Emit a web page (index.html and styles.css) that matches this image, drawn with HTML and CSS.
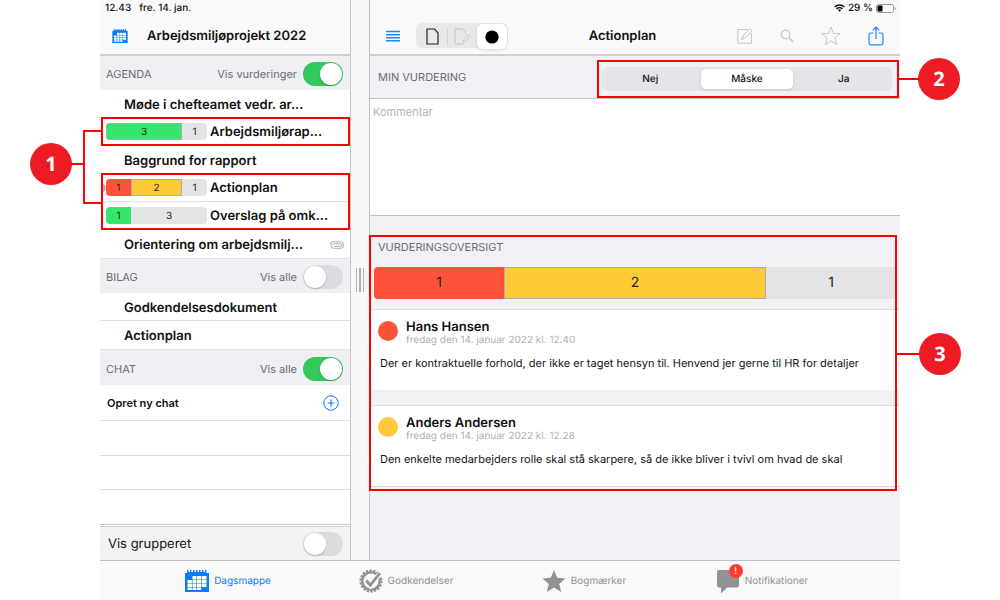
FILE: index.html
```html
<!DOCTYPE html>
<html lang="da">
<head>
<meta charset="utf-8">
<meta name="viewport" content="width=device-width, initial-scale=1">
<title>Arbejdsmiljøprojekt 2022</title>
<link rel="stylesheet" href="styles.css">
</head>
<body>
<svg class="defs" aria-hidden="true">
  <symbol id="calendar" viewBox="0 0 24 22">
    <path d="M0 3h2V0h1.400v2h1.600V0h1.400v2H8V0h1.400v2H11V0h1.400v2H14V0h1.400v2H17V0h1.400v2H20V0h1.400v3H24v19H0z" fill="currentColor"/>
    <path d="M7.500 6h3.500v3.500H7.500zM11.600 6h4.600v3.500h-4.600zM16.800 6h4.700v3.500h-4.700zM2.500 10.100h4.400v3.400H2.500zM7.500 10.100h3.500v3.400H7.500zM11.600 10.100h4.600v3.400h-4.600zM16.800 10.100h4.700v3.400h-4.700zM2.500 14.100h4.400v2.900H2.500zM7.500 14.100h3.500v2.900H7.500zM11.600 14.100h4.600v2.900h-4.600zM16.800 14.100h4.700v2.900h-4.700zM2.500 17.600h4.400V20H2.500zM7.500 17.600h3.500V20H7.500zM11.600 17.600h4.600V20h-4.600z" fill="#fff"/>
  </symbol>
</svg>
<div class="app">
  <div class="workspace">
    <aside class="sidebar">
      <header class="bar">
        <div class="status"><span>12.43</span><span>fre. 14. jan.</span></div>
        <div class="bar-title">
          <svg class="icon-cal-small"><use href="#calendar"/></svg>
          <h1>Arbejdsmiljøprojekt 2022</h1>
        </div>
      </header>

      <div class="section-head">
        <h2>AGENDA</h2>
        <label for="ratings">Vis vurderinger</label>
        <input class="switch" id="ratings" type="checkbox" role="switch" checked>
      </div>
      <div class="agenda">
        <a class="row indent" href="#">Møde i chefteamet vedr. ar...</a>
        <div class="framed">
          <a class="row" href="#"><span class="mini"><span class="seg green outline" style="flex-grow:3">3</span><span class="seg">1</span></span>Arbejdsmiljørap...</a>
        </div>
        <a class="row indent" href="#">Baggrund for rapport</a>
        <div class="framed">
          <a class="row marked" href="#"><span class="mini"><span class="seg red">1</span><span class="seg yellow outline" style="flex-grow:2">2</span><span class="seg">1</span></span>Actionplan</a>
          <a class="row" href="#"><span class="mini"><span class="seg green">1</span><span class="seg" style="flex-grow:3">3</span></span>Overslag på omk...</a>
        </div>
        <a class="row indent final" href="#">Orientering om arbejdsmilj...
          <svg class="clip" viewBox="0 0 15 8"><path d="M5 5.300h6.500a1.200 1.200 0 0 0 0-2.500H4.500a2.200 2.200 0 0 0 0 4.500H11.500a3 3 0 0 0 0-6.500H3.500A3 3 0 0 0 1 3.500" fill="none" stroke="#adadad" stroke-width="1"/></svg>
        </a>
        <span class="bracket"></span>
        <span class="badge badge-left">1</span>
      </div>

      <div class="section-head">
        <h2>BILAG</h2>
        <label for="files">Vis alle</label>
        <input class="switch" id="files" type="checkbox" role="switch">
      </div>
      <a class="row indent" href="#">Godkendelsesdokument</a>
      <a class="row indent final" href="#">Actionplan</a>

      <div class="section-head tall">
        <h2>CHAT</h2>
        <label for="chats">Vis alle</label>
        <input class="switch" id="chats" type="checkbox" role="switch" checked>
      </div>
      <button class="new-chat" type="button">Opret ny chat
        <svg viewBox="0 0 16 16"><g fill="none" stroke="#0a7aff"><circle cx="8" cy="8" r="7.200"/><path d="M8 4.500v7M4.500 8h7" stroke-width="1.200"/></g></svg>
      </button>
      <div class="blank"></div>
      <div class="blank"></div>
      <div class="blank last"></div>
      <div class="grouping">
        <label for="grouped">Vis grupperet</label>
        <input class="switch" id="grouped" type="checkbox" role="switch">
      </div>
    </aside>

    <div class="divider"><span class="grip"></span></div>

    <main class="detail">
      <header class="bar">
        <div class="status right">
          <svg class="wifi" viewBox="0 0 11 8"><path d="M.7 3a7 7 0 0 1 9.600 0M2.500 4.900a4.300 4.300 0 0 1 6 0" fill="none" stroke="#111" stroke-width="1.500"/><path d="M3.900 6.100a2.300 2.300 0 0 1 3.200 0L5.500 7.800z" fill="#111"/></svg>
          <span>29 %</span>
          <svg class="battery" viewBox="0 0 20 9"><rect x=".5" y=".5" width="17" height="8" rx="2" fill="none" stroke="#999"/><rect x="1.500" y="1.500" width="5" height="6" rx="1" fill="#000"/><path d="M18.700 3v3a1.600 1.600 0 0 0 0-3" fill="#999"/></svg>
        </div>
        <div class="toolbar">
          <button type="button" aria-label="Menu"><svg width="14" height="12" viewBox="0 0 14 12"><path d="M0 1.500h14M0 4.700h14M0 7.700h14M0 10.800h14" stroke="#1a88ff" stroke-width="1.500"/></svg></button>
          <div class="modes">
            <button type="button" aria-label="Dokument"><svg width="13" height="17" viewBox="0 0 13 17"><path d="M1 1h7.500L12 5v11H1z" fill="none" stroke="#222" stroke-width="1.200"/></svg></button>
            <button type="button" aria-label="Rediger dokument"><svg width="17" height="17" viewBox="0 0 17 17"><g fill="none" stroke="#c4c4c6"><path d="M11.500 6.500V4.500L8.500 1H1v15h8.500"/><path d="M9 14.500l.8-3 4.700-4.800 1.900 1.900-4.700 4.900z"/></g></svg></button>
            <button class="active" type="button" aria-label="Vurdering"><svg width="14" height="14" viewBox="0 0 14 14"><circle cx="7" cy="7" r="6.600"/></svg></button>
          </div>
          <h1>Actionplan</h1>
          <div class="actions">
            <button type="button" aria-label="Rediger"><svg width="16" height="16" viewBox="0 0 16 16"><g fill="none" stroke="#c7c7c8"><path d="M11 1.500H.8v13.700h13.700V5"/><path d="M4.500 11.500l1-3.300 7.800-7.500 2 2-7.600 7.600zM5.500 8.200l2.200 2.100"/></g></svg></button>
            <button type="button" aria-label="Søg"><svg width="14" height="14" viewBox="0 0 14 14"><g fill="none" stroke="#c7c7c8"><circle cx="5.500" cy="5.500" r="4.300" stroke-width="1.200"/><path d="M8.700 8.700l4.500 4.300" stroke-width="1.600"/></g></svg></button>
            <button type="button" aria-label="Bogmærk"><svg width="20" height="20" viewBox="0 0 20 20"><path d="M10 .9l2.400 6.500 6.800.3-5.300 4.300 1.900 6.700-5.800-3.900-5.800 3.900L6.100 12 .8 7.700l6.800-.3z" fill="none" stroke="#c7c7c8"/></svg></button>
            <button type="button" aria-label="Del"><svg width="16" height="20" viewBox="0 0 16 20"><path d="M5.500 7H2.500Q1 7 1 8.500v8.800q0 1.500 1.500 1.500h11q1.500 0 1.500-1.500V8.500Q15 7 13.500 7h-3M8 13V1.200M4.700 4.300L8 1l3.300 3.300" fill="none" stroke="#1a88ff" stroke-width="1.200"/></svg></button>
          </div>
        </div>
      </header>

      <section class="rating">
        <h2>MIN VURDERING</h2>
        <div class="choice-frame">
          <div class="choice" role="radiogroup" aria-label="Min vurdering">
            <label><input type="radio" name="rating"><span>Nej</span></label>
            <label><input type="radio" name="rating" checked><span>Måske</span></label>
            <label><input type="radio" name="rating"><span>Ja</span></label>
          </div>
          <span class="badge badge-right">2</span>
        </div>
      </section>
      <textarea class="comment" aria-label="Kommentar" placeholder="Kommentar"></textarea>

      <section class="overview">
        <h2>VURDERINGSOVERSIGT</h2>
        <div class="summary"><span class="seg red">1</span><span class="seg yellow outline" style="flex-grow:2">2</span><span class="seg">1</span></div>
        <article class="card">
          <span class="dot red"></span>
          <div><h3>Hans Hansen</h3><time datetime="2022-01-14T12:40">fredag den 14. januar 2022 kl. 12.40</time></div>
          <p>Der er kontraktuelle forhold, der ikke er taget hensyn til. Henvend jer gerne til HR for detaljer</p>
        </article>
        <article class="card">
          <span class="dot yellow"></span>
          <div><h3>Anders Andersen</h3><time datetime="2022-01-14T12:28">fredag den 14. januar 2022 kl. 12.28</time></div>
          <p>Den enkelte medarbejders rolle skal stå skarpere, så de ikke bliver i tvivl om hvad de skal</p>
        </article>
        <span class="overview-frame"><span class="badge badge-right">3</span></span>
      </section>
    </main>
  </div>

  <nav class="tabs">
    <a class="current" href="#"><svg width="24" height="22"><use href="#calendar"/></svg>Dagsmappe</a>
    <a href="#"><svg width="24" height="24" viewBox="0 0 24 24"><circle cx="12" cy="12" r="8.800" fill="none" stroke="#929292" stroke-width="2.600"/><circle cx="12" cy="12" r="10.600" fill="none" stroke="#929292" stroke-width="2" stroke-dasharray="2.330 1.370"/><path d="M7 11.500l4.300 5L21.500 4" fill="none" stroke="#f9f9f9" stroke-width="5"/><path d="M7.300 11.500l4 4.600L21 4.200" fill="none" stroke="#929292" stroke-width="2.700"/></svg>Godkendelser</a>
    <a href="#"><svg width="24" height="24" viewBox="0 0 24 24"><path d="M12 1l3.200 7.800 8.300.6-6.300 5.500 2 8.100-7.200-4.500L4.800 23l2-8.100L.5 9.400l8.300-.6z" fill="#929292"/></svg>Bogmærker</a>
    <a href="#"><span class="notify"><svg width="24" height="26" viewBox="0 0 24 26"><path d="M3 2h18q2 0 2 2v13.500q0 2-2 2H11L5 25.500v-6H3q-2 0-2-2V4q0-2 2-2z" fill="#929292"/></svg><span class="alert">!</span></span>Notifikationer</a>
  </nav>
</div>
</body>
</html>
```

FILE: styles.css
```css
* { box-sizing: border-box; }
body {
  margin: 0;
  padding: 0 100px;
  background: #fff;
  color: #111;
  font: 11px/16px Inter, "Noto Sans", sans-serif;
  text-rendering: geometricPrecision;
}
h1, h2, h3, p { margin: 0; }
button { padding: 0; border: 0; background: none; font: inherit; color: inherit; display: flex; align-items: center; justify-content: center; }
a { color: inherit; text-decoration: none; }
svg { display: block; flex: none; }
.defs { position: absolute; width: 0; height: 0; }

.app { min-height: 100vh; display: flex; flex-direction: column; }
.workspace { flex: 1; display: grid; grid-template-columns: minmax(251px, 31%) 18px 1fr; }

/* Top bars */
.bar { height: 56px; background: #f9f9f9; border-bottom: 2px solid #d0d0d2; }
.status { height: 16px; display: flex; gap: 8px; padding-left: 5px; font-size: 10px; font-weight: 500; }
.status.right { justify-content: flex-end; align-items: center; gap: 3px; padding: 0 4px; }
.wifi { width: 11px; height: 8px; }
.battery { width: 20px; height: 9px; }
.bar-title { display: flex; align-items: center; gap: 19px; padding: 11px 12px 0; }
.bar h1 { font-size: 13px; line-height: 18px; font-weight: 600; }
.icon-cal-small { width: 16px; height: 14px; color: #0a7aff; }

/* Sidebar */
.sidebar { display: flex; flex-direction: column; border-right: 1px solid #c6c6c8; }
.section-head { height: 34px; flex: none; display: flex; align-items: center; gap: 6px; padding: 2px 7px 0 6px; background: #efeff4; color: #6d6d72; }
.section-head.tall { height: 35px; }
h2 { font-size: 11px; font-weight: 400; color: #6d6d72; }
.section-head h2 { flex: 1; }
.switch { appearance: none; flex: none; width: 40px; height: 24px; margin: 0; border-radius: 12px; background: #dcdce0; display: flex; align-items: center; padding: 0 1px; }
.switch::before { content: ""; width: 22px; height: 22px; border-radius: 50%; background: #fff; box-shadow: 0 1px 2px #0003; }
.switch:checked { background: #34c759; justify-content: flex-end; }
.agenda { position: relative; }
.row { height: 28px; display: flex; align-items: center; gap: 3px; padding: 0 6px; border-bottom: 1px solid #e2e2e5; font-size: 13px; font-weight: 600; white-space: nowrap; }
.row.final { height: 29px; }
.row.indent { padding-top: 2px; padding-left: 24px; }
.clip { width: 15px; height: 8px; margin-left: auto; }
.framed { position: relative; }
.framed::after { content: ""; position: absolute; inset: -1px 0 0 1px; border: 2px solid #f00; pointer-events: none; }
.marked { position: relative; }
.marked::before { content: ""; position: absolute; left: 1px; top: 9px; width: 5px; height: 10px; border-radius: 0 5px 5px 0; background: #b5b5ba; }
.mini { width: 101px; height: 17px; display: flex; border-radius: 4px; overflow: hidden; font-size: 10px; font-weight: 400; }
.seg { flex: 1 1 0; display: flex; align-items: center; justify-content: center; background: #e4e4e4; color: #222; }
.red { background: #ff523b; }
.yellow { background: #ffca38; }
.green { background: #34e66b; }
.outline { border: 1px solid #aaaeb0; }
.new-chat { height: 36px; flex: none; justify-content: space-between; padding: 0 11px 0 7px; border-bottom: 1px solid #e2e2e5; font-weight: 600; }
.new-chat svg { width: 16px; height: 16px; }
.blank { flex: 1 1 0; min-height: 34px; border-bottom: 1px solid #dcdcdf; }
.blank.last { border-color: #c6c6c8; }
.grouping { height: 34px; flex: none; margin-top: 1px; border-top: 1px solid #d0d0d2; display: flex; align-items: center; justify-content: space-between; padding: 0 7px 0 8px; background: #f3f3f3; font-size: 13px; }

.divider { display: flex; align-items: center; justify-content: center; background: #f7f7f7; }
.grip { width: 8px; height: 24px; border: solid #b2b2b2; border-width: 0 1px; background: linear-gradient(#b2b2b2, #b2b2b2) center / 2px 100% no-repeat; }

/* Detail pane */
.detail { background: #f1f1f6; border-left: 1px solid #c0c0c2; }
.toolbar { display: flex; align-items: center; padding: 7px 16px 0; }
.toolbar h1 { flex: 1; text-align: center; }
.modes { display: grid; grid-template-columns: repeat(3, 30px); height: 25px; margin-left: 16px; padding: 1px; border-radius: 6px; background: #e9e9eb; }
.modes button + button:not(.active) { border-left: 1px solid #d4d4d6; margin: 4px 0; }
.modes .active { background: #fff; border-radius: 6px; box-shadow: 0 1px 3px #0002; }
.actions { display: flex; align-items: center; gap: 27px; }
.rating { height: 43px; display: flex; align-items: center; justify-content: space-between; padding: 0 1px 0 8px; border-bottom: 1px solid #bfbfc2; }
.choice-frame { position: relative; width: 58%; height: 38px; padding: 5px 5px 0 3px; border: 2px solid #f00; margin-top: 3px; }
.choice { height: 24px; display: grid; grid-template-columns: repeat(3, 1fr); border-radius: 6px; background: #e4e4e9; text-align: center; font-size: 10px; }
.choice input { position: absolute; opacity: 0; pointer-events: none; }
.choice span { display: block; margin: 2px; line-height: 20px; border-radius: 5px; font-weight: 500; }
.choice :checked + span { background: #fff; box-shadow: 0 1px 3px #0002; }
.comment { display: block; width: 100%; height: 117px; margin: 0; padding: 5px 3px; border: 0; border-bottom: 1px solid #bfbfc2; resize: none; outline: 0; background: #fff; font: inherit; }
.comment::placeholder { color: #b4b4b6; opacity: 1; }

.overview { position: relative; margin-top: 20px; }
.overview h2 { padding: 3px 8px 0; }
.summary { height: 32px; margin: 12px 4px 10px; display: flex; border-radius: 4px; overflow: hidden; font-size: 14px; }
.card { height: 81px; display: grid; grid-template-columns: 20px 1fr; grid-template-rows: 30px 1fr; column-gap: 8px; padding: 9px 8px; border-top: 1px solid #dcdce0; background: #fff; }
.card + .card { margin-top: 15px; box-shadow: 0 1px #d8d8db; }
.dot { width: 20px; height: 20px; margin-top: 2px; border-radius: 50%; }
.card h3 { font-size: 13px; line-height: 17px; font-weight: 600; }
.card time { display: block; font-size: 10px; line-height: 9px; color: #b0b0b2; }
.card p { grid-column: 1 / -1; padding: 6px 2px; }

/* Callouts */
.overview-frame { position: absolute; inset: -1px 3px -5px -1px; border: 2px solid #f00; pointer-events: none; }
.bracket { position: absolute; left: -17px; top: 40px; width: 18px; height: 74px; border: 2px solid #f00; border-right: 0; }
.badge { position: absolute; width: 42px; height: 42px; border-radius: 50%; background: #ed1c24; color: #fff; font: 700 20px/42px "Open Sans", sans-serif; text-align: center; }
.badge::before { content: ""; position: absolute; top: 20px; height: 2px; background: #f00; }
.badge-left { left: -70px; top: 53px; }
.badge-left::before { left: 41px; width: 13px; }
.badge-right { left: calc(100% + 24px); top: calc(50% - 30px); }
.badge-right::before { right: 41px; width: 24px; }
.choice-frame .badge { left: calc(100% + 21px); top: calc(50% - 21px); }
.choice-frame .badge::before { width: 21px; }

/* Tabs */
.tabs { height: 40px; display: grid; grid-template-columns: repeat(4, 1fr); padding: 1px 49px 0 39px; background: #f9f9f9; border-top: 1px solid #c0c0c2; color: #929292; font-size: 10px; }
.tabs a { display: flex; align-items: center; justify-content: center; gap: 5px; }
.tabs .current { color: #0a7aff; }
.notify { position: relative; }
.alert { position: absolute; left: 13px; top: -4px; width: 14px; height: 14px; border-radius: 50%; background: #ff3b30; color: #fff; line-height: 14px; text-align: center; }
```
